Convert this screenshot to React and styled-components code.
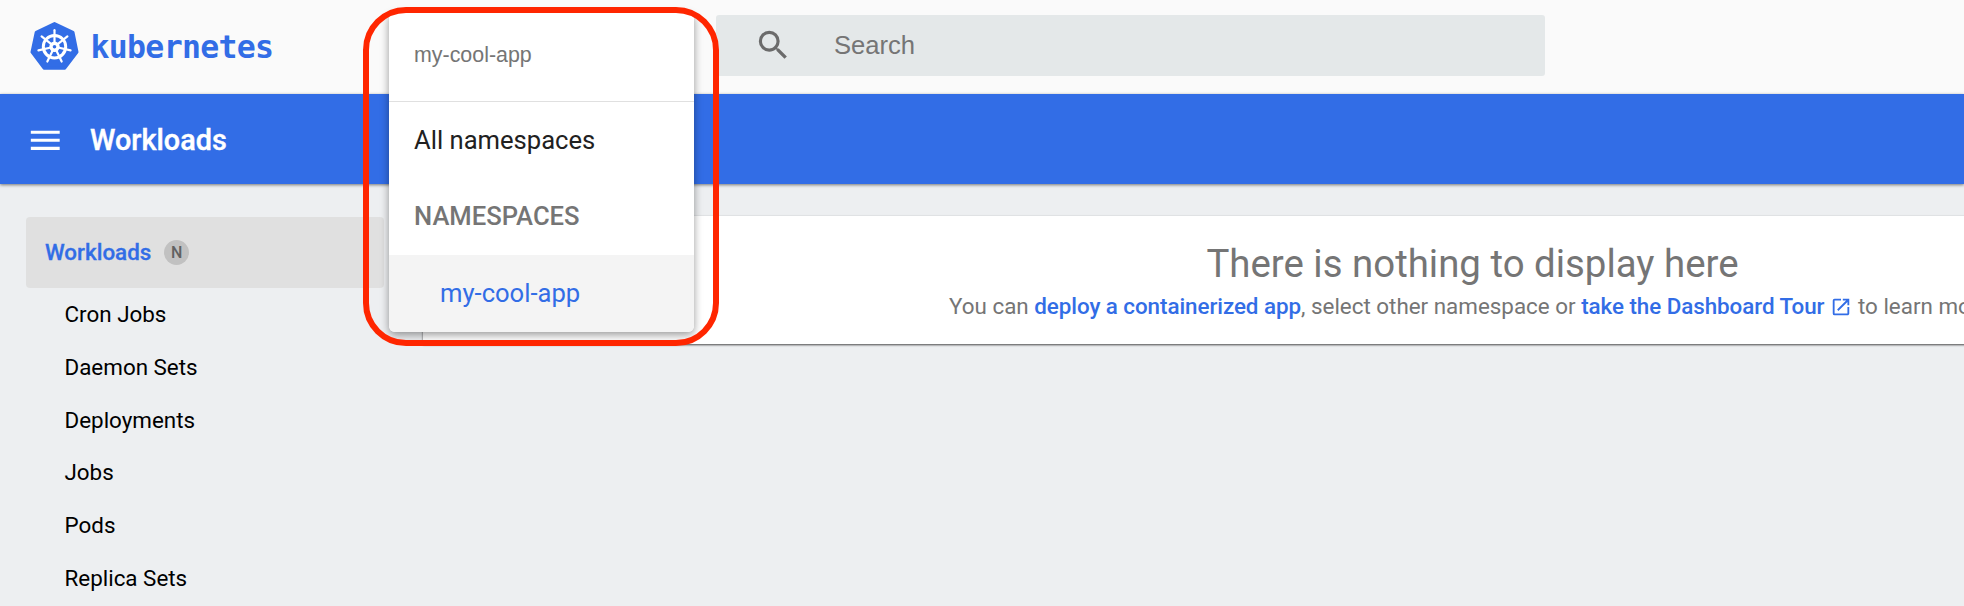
import React from "react";
import styled, { createGlobalStyle } from "styled-components";
import { MdSearch, MdMenu, MdOpenInNew } from "react-icons/md";

const GlobalStyle = createGlobalStyle`
  * { box-sizing: border-box; }
  body {
    margin: 0;
    background: #edeff1;
    font-family: Roboto, "Liberation Sans", sans-serif;
    overflow: hidden;
  }
`;

const BLUE = "#326de6";
const GREY = "#757575";

const Page = styled.div`
  position: relative;
  width: 100%;
  height: 606px;
  overflow: hidden;
  background: #edeff1;
  color: #000;
`;

const Header = styled.header`
  display: flex;
  align-items: flex-start;
  height: 94px;
  background: #fafafa;
`;

const Brand = styled.div`
  display: flex;
  width: 716px;
  padding: 21px 0 0 30px;
`;

const BrandName = styled.span`
  margin-left: 10.5px;
  font: 700 31.5px/52px "DejaVu Sans Mono", monospace;
  letter-spacing: -0.68px;
  color: ${BLUE};
`;

const SearchBox = styled.div`
  display: flex;
  align-items: center;
  width: 829px;
  height: 61px;
  margin-top: 15px;
  padding-left: 38px;
  border-radius: 3px;
  background: #e4e8e9;
  color: #6b6b6b;
`;

const SearchHint = styled.span`
  margin-left: 41.5px;
  font-family: "Liberation Sans", Arial, sans-serif;
  font-size: 25.6px;
  color: ${GREY};
`;

const Toolbar = styled.div`
  display: flex;
  align-items: center;
  height: 90px;
  padding: 3px 0 0 26px;
  background: ${BLUE};
  color: #fff;
  box-shadow: 0 1px 3px rgba(0, 0, 0, 0.5);
`;

const Title = styled.h1`
  margin: 0 0 2px 25.5px;
  font-size: 28.8px;
  line-height: 40px;
  font-weight: 500;
  -webkit-text-stroke: 0.4px;
`;

const Body = styled.div`
  display: flex;
  width: 2522px;
`;

const Sidebar = styled.nav`
  flex: none;
  width: 423px;
  padding: 33px 0 0 26px;
`;

const ActiveGroup = styled.div`
  display: flex;
  align-items: center;
  width: 358px;
  height: 71px;
  padding: 0 0 1px 19px;
  border-radius: 4px;
  background: #e0e0e0;
  font-size: 22.4px;
  font-weight: 500;
  color: ${BLUE};
  -webkit-text-stroke: 0.3px;
`;

const Badge = styled.span`
  display: flex;
  align-items: center;
  justify-content: center;
  width: 25px;
  height: 25px;
  margin-left: 13px;
  border-radius: 50%;
  background: #c1c1c1;
  font-size: 16px;
  color: #616161;
  -webkit-text-stroke: 0;
`;

const NavItem = styled.div`
  height: 52.8px;
  padding-left: 38.5px;
  font-size: 22.4px;
  line-height: 52.8px;
`;

const Card = styled.main`
  flex: none;
  width: 2099px;
  height: 128px;
  margin-top: 32px;
  padding-top: 24px;
  background: #fff;
  text-align: center;
  color: ${GREY};
  box-shadow: 0 1px 2px rgba(0, 0, 0, 0.7);
`;

const CardTitle = styled.div`
  font-size: 38.4px;
  line-height: 48px;
`;

const CardText = styled.div`
  font-size: 22.4px;
  line-height: 36px;
`;

const CardLink = styled.span`
  font-weight: 500;
  letter-spacing: -0.06px;
  color: ${BLUE};

  svg {
    margin-left: 6px;
    vertical-align: -4px;
  }
`;

const Menu = styled.div`
  position: absolute;
  left: 389px;
  top: 12px;
  width: 305px;
  height: 320px;
  border-radius: 6px;
  overflow: hidden;
  background: #fff;
  box-shadow: 0 3px 8px rgba(0, 0, 0, 0.4);
`;

const MenuFilter = styled.div`
  height: 90px;
  padding-left: 25px;
  border-bottom: 1px solid #e0e0e0;
  font: 21.4px/86px "Liberation Sans", Arial, sans-serif;
  color: ${GREY};
`;

const MenuItem = styled.div`
  height: 76.6px;
  padding-left: ${(p) => (p.$nested ? 51 : 25)}px;
  font-size: 25.6px;
  line-height: ${(p) => (p.$group ? 75 : p.$nested ? 76 : 77)}px;
  font-weight: ${(p) => (p.$group ? 500 : 400)};
  color: ${(p) => (p.$group ? GREY : p.$nested ? BLUE : "#212121")};
  background: ${(p) => (p.$nested ? "#f4f4f4" : "transparent")};
`;

const Highlight = styled.div`
  position: absolute;
  left: 363px;
  top: 7px;
  width: 356px;
  height: 339px;
  border: 6px solid #ff2600;
  border-radius: 43px;
`;

const SPOKES = [0, 1, 2, 3, 4, 5, 6];

function KubernetesMark() {
  return (
    <svg width="50" height="50" viewBox="30 21 50 50">
      <path
        d="M54.5 23.5 73 32.3 77 52 64.8 68.2H44L32 52 36.2 32.3Z"
        fill={BLUE}
        stroke={BLUE}
        strokeWidth="3"
        strokeLinejoin="round"
      />
      <g stroke="#fff" fill="none">
        <circle cx="54.5" cy="46.7" r="11.2" strokeWidth="3" />
        {SPOKES.map((n) => (
          <g key={n} transform={`rotate(${(n * 360) / 7} 54.5 46.7)`}>
            <path d="M54.5 43V30.2" strokeWidth="2.2" strokeLinecap="round" />
          </g>
        ))}
        <circle cx="54.5" cy="46.7" r="3.5" strokeWidth="3.4" />
      </g>
    </svg>
  );
}

const ITEMS = ["Cron Jobs", "Daemon Sets", "Deployments", "Jobs", "Pods", "Replica Sets"];

export default function App() {
  return (
    <>
      <GlobalStyle />
      <Page>
        <Header>
          <Brand>
            <KubernetesMark />
            <BrandName>kubernetes</BrandName>
          </Brand>
          <SearchBox>
            <MdSearch size={38.5} />
            <SearchHint>Search</SearchHint>
          </SearchBox>
        </Header>
        <Toolbar>
          <MdMenu size={38.5} />
          <Title>Workloads</Title>
        </Toolbar>
        <Body>
          <Sidebar>
            <ActiveGroup>
              Workloads<Badge>N</Badge>
            </ActiveGroup>
            {ITEMS.map((name) => (
              <NavItem key={name}>{name}</NavItem>
            ))}
          </Sidebar>
          <Card>
            <CardTitle>There is nothing to display here</CardTitle>
            <CardText>
              You can <CardLink>deploy a containerized app</CardLink>, select other namespace or{" "}
              <CardLink>
                take the Dashboard Tour
                <MdOpenInNew size={22} />
              </CardLink>{" "}
              to learn more.
            </CardText>
          </Card>
        </Body>
        <Menu>
          <MenuFilter>my-cool-app</MenuFilter>
          <MenuItem>All namespaces</MenuItem>
          <MenuItem $group>NAMESPACES</MenuItem>
          <MenuItem $nested>my-cool-app</MenuItem>
        </Menu>
        <Highlight />
      </Page>
    </>
  );
}
